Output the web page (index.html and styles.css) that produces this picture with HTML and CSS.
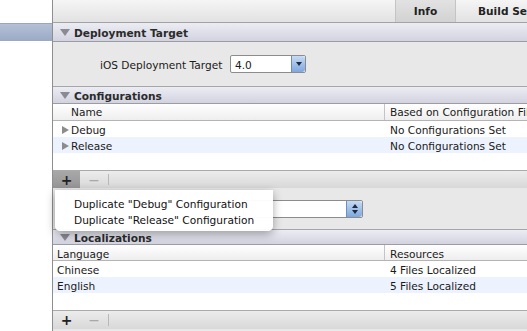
FILE: index.html
```html
<!DOCTYPE html>
<html lang="en">
<head>
    <meta charset="UTF-8">
    <title>Project Info</title>
    <link rel="stylesheet" href="styles.css">
</head>
<body>
    <div class="window">
        <!-- Source list -->
        <div class="sidebar">
            <div class="side-blank"></div>
            <div class="side-selected"></div>
        </div>

        <!-- Editor pane -->
        <div class="editor">
            <div class="toolbar">
                <div class="tab-spacer"></div>
                <div class="tab active">Info</div>
                <div class="tab">Build Settings</div>
            </div>

            <div class="section-head head-1"><span class="disclosure"></span>Deployment Target</div>
            <div class="section-body deploy">
                <label class="field-label">iOS Deployment Target</label>
                <div class="popup">
                    <span class="popup-value">4.0</span>
                    <span class="popup-arrow"><span class="arrow-down"></span></span>
                </div>
            </div>

            <div class="section-head head-2"><span class="disclosure"></span>Configurations</div>
            <div class="table">
                <div class="table-head conf-head">
                    <div class="col-first">Name</div>
                    <div class="col-second">Based on Configuration File</div>
                </div>
                <div class="row">
                    <div class="col-first"><span class="expander"></span>Debug</div>
                    <div class="col-second">No Configurations Set</div>
                </div>
                <div class="row alt">
                    <div class="col-first"><span class="expander"></span>Release</div>
                    <div class="col-second">No Configurations Set</div>
                </div>
                <div class="row blank"></div>
            </div>
            <div class="bottom-bar bar-1">
                <div class="bar-btn pressed">+</div>
                <div class="bar-btn minus">&minus;</div>
                <div class="bar-sep"></div>
            </div>
            <div class="section-body use-for">
                <div class="stepper-popup">
                    <span class="popup-arrow stepper"><span class="arrow-up"></span><span class="arrow-down"></span></span>
                </div>
            </div>

            <div class="section-head head-3"><span class="disclosure"></span>Localizations</div>
            <div class="table">
                <div class="table-head loc-head">
                    <div class="col-first lang">Language</div>
                    <div class="col-second">Resources</div>
                </div>
                <div class="row">
                    <div class="col-first lang">Chinese</div>
                    <div class="col-second">4 Files Localized</div>
                </div>
                <div class="row alt">
                    <div class="col-first lang">English</div>
                    <div class="col-second">5 Files Localized</div>
                </div>
                <div class="row blank"></div>
            </div>
            <div class="bottom-bar bar-2">
                <div class="bar-btn">+</div>
                <div class="bar-btn minus">&minus;</div>
                <div class="bar-sep"></div>
            </div>
        </div>

        <!-- Menu opened from the + button -->
        <div class="menu">
            <div class="menu-item">Duplicate "Debug" Configuration</div>
            <div class="menu-item">Duplicate "Release" Configuration</div>
        </div>
    </div>
</body>
</html>
```

FILE: styles.css
```css
body {
    margin: 0;
    padding: 0;
    font-family: "DejaVu Sans", "Liberation Sans", sans-serif;
    font-size: 10.6px;
    color: #1a1a1a;
    background-color: #ffffff;
}
.window {
    position: relative;
    display: flex;
    width: 527px;
    height: 331px;
    overflow: hidden;
}
.sidebar {
    width: 52px;
    flex-shrink: 0;
    background-color: #ffffff;
    border-right: 1px solid #8e8e8e;
}
.side-blank {
    height: 23px;
}
.side-selected {
    height: 18px;
    background: linear-gradient(#b4c0d6, #9aa9c5);
    border-top: 1px solid #98a6c0;
    box-sizing: border-box;
}
.editor {
    flex: 1;
    display: flex;
    flex-direction: column;
    background-color: #e8e8e8;
}
.toolbar {
    display: flex;
    height: 23px;
    box-sizing: border-box;
    background: linear-gradient(#f5f5f5, #e2e2e2);
    border-bottom: 1px solid #a3a3a3;
}
.tab-spacer {
    width: 342px;
}
.tab {
    display: flex;
    align-items: center;
    padding: 0 22px;
    font-weight: bold;
    color: #222;
    border-left: 1px solid #c4c4c4;
    white-space: nowrap;
}
.tab.active {
    width: 60px;
    box-sizing: border-box;
    justify-content: center;
    padding: 0;
    background: linear-gradient(#e2e2e2, #d2d2d2);
}
.section-head {
    display: flex;
    align-items: center;
    box-sizing: border-box;
    padding: 1px 0 0 21px;
    position: relative;
    font-weight: bold;
    color: #2b2b2b;
    background: linear-gradient(#ececf4, #d2d3df);
    border-bottom: 1px solid #9c9ca4;
}
.head-1 { height: 19px; }
.head-2 { height: 18px; border-top: 1px solid #a6a6a6; }
.head-3 { height: 16px; border-top: 1px solid #a6a6a6; }
.disclosure {
    position: absolute;
    left: 7px;
    top: 50%;
    margin-top: -3px;
    width: 0;
    height: 0;
    border-left: 5px solid transparent;
    border-right: 5px solid transparent;
    border-top: 7px solid #8a8a94;
}
.section-body {
    display: flex;
    align-items: center;
}
.deploy {
    height: 44px;
    padding-left: 47px;
}
.field-label {
    width: 130px;
    padding-top: 1px;
    color: #1a1a1a;
}
.popup {
    display: flex;
    width: 76px;
    height: 18px;
    box-sizing: border-box;
    background-color: #ffffff;
    border: 1px solid #8c8c8c;
    border-radius: 2px;
}
.popup-value {
    flex: 1;
    padding: 1px 0 0 4px;
    line-height: 16px;
}
.popup-arrow {
    width: 13px;
    display: flex;
    flex-direction: column;
    align-items: center;
    justify-content: center;
    gap: 2px;
    background: linear-gradient(#c6dbf5, #7fa7dc);
    border-left: 1px solid #6c8fc0;
    border-radius: 0 3px 3px 0;
}
.arrow-down {
    width: 0;
    height: 0;
    border-left: 3px solid transparent;
    border-right: 3px solid transparent;
    border-top: 4px solid #1c2a44;
}
.arrow-up {
    width: 0;
    height: 0;
    border-left: 3px solid transparent;
    border-right: 3px solid transparent;
    border-bottom: 4px solid #1c2a44;
}
.table {
    background-color: #ffffff;
}
.table-head {
    display: flex;
    box-sizing: border-box;
    background: linear-gradient(#ffffff, #eeeeee);
    border-bottom: 1px solid #b4b4b4;
}
.conf-head { height: 17px; }
.loc-head { height: 16px; }
.row {
    display: flex;
    height: 16px;
}
.row.alt {
    background-color: #edf3fe;
}
.row.blank {
    height: 17px;
}
.table-head .col-first,
.table-head .col-second,
.row .col-first,
.row .col-second {
    padding-top: 2px;
    line-height: 14px;
    white-space: nowrap;
}
.conf-head .col-first,
.conf-head .col-second {
    padding-top: 1px;
}
.col-first {
    width: 332px;
    box-sizing: border-box;
    padding-left: 18px;
    position: relative;
}
.col-first.lang {
    padding-left: 4px;
}
.table-head .col-first {
    border-right: 1px solid #c4c4c4;
}
.col-second {
    flex: 1;
    padding-left: 5px;
}
.expander {
    position: absolute;
    left: 9px;
    top: 5px;
    width: 0;
    height: 0;
    border-top: 4px solid transparent;
    border-bottom: 4px solid transparent;
    border-left: 7px solid #8c8c8c;
}
.bottom-bar {
    display: flex;
    align-items: stretch;
    box-sizing: border-box;
    background: linear-gradient(#ececec, #d8d8d8);
    border-top: 1px solid #aaaaaa;
}
.bar-1 { height: 18px; }
.bar-2 { height: 19px; }
.bar-btn {
    width: 27px;
    display: flex;
    align-items: center;
    justify-content: center;
    font-size: 14px;
    font-weight: bold;
    color: #222;
}
.bar-btn.pressed {
    background: linear-gradient(#a8a8a8, #969696);
}
.bar-btn.minus {
    color: #a8a8a8;
    font-weight: normal;
    width: 28px;
}
.bar-sep {
    width: 1px;
    margin: 3px 0;
    background-color: #b8b8b8;
}
.use-for {
    height: 41px;
    justify-content: flex-start;
}
.stepper-popup {
    display: flex;
    justify-content: flex-end;
    margin-left: 190px;
    width: 120px;
    height: 18px;
    box-sizing: border-box;
    background-color: #ffffff;
    border: 1px solid #8c8c8c;
    border-radius: 2px;
}
.stepper {
    width: 15px;
}
.menu {
    position: absolute;
    left: 55px;
    top: 190px;
    width: 218px;
    padding: 5px 0 4px;
    box-sizing: border-box;
    background-color: rgba(255, 255, 255, 0.97);
    border-radius: 0 0 5px 5px;
    box-shadow: 0 3px 10px rgba(0, 0, 0, 0.35);
}
.menu-item {
    height: 16px;
    line-height: 16px;
    padding: 1px 0 0 19px;
    box-sizing: border-box;
    color: #111;
    white-space: nowrap;
}
```
